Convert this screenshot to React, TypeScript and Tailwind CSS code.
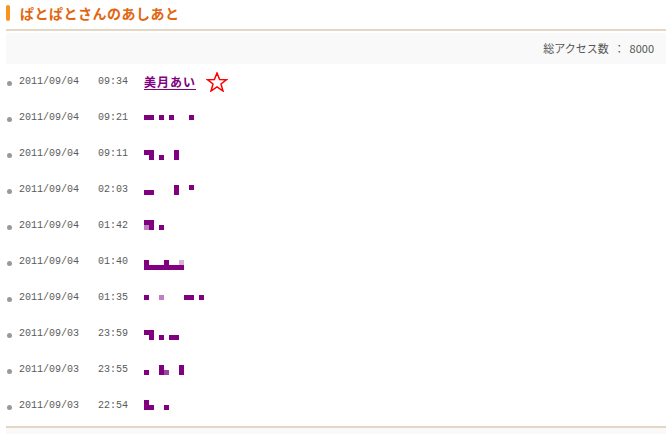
import React from "react";

type Cell = [number, number, number, number, string?];

type Visit = {
  date: string;
  time: string;
  cells: Cell[];
};

const D = "#800080";
const L = "#c080c0";
const LL = "#d8b0d8";
const M = "#a040a0";

const visits: Visit[] = [
  { date: "2011/09/04", time: "09:21", cells: [[0, 16, 10, 5], [15, 16, 5, 5], [25, 16, 5, 5], [45, 16, 5, 5]] },
  { date: "2011/09/04", time: "09:11", cells: [[0, 15, 10, 5], [5, 20, 5, 5], [15, 20, 5, 5], [30, 15, 5, 10]] },
  { date: "2011/09/04", time: "02:03", cells: [[30, 14, 5, 10], [45, 14, 5, 5], [0, 19, 10, 5]] },
  { date: "2011/09/04", time: "01:42", cells: [[0, 13, 10, 5], [0, 18, 5, 5, L], [5, 18, 5, 5], [15, 18, 5, 5]] },
  { date: "2011/09/04", time: "01:40", cells: [[0, 17, 5, 5], [20, 17, 5, 5], [35, 17, 5, 5, LL], [0, 22, 40, 5]] },
  { date: "2011/09/04", time: "01:35", cells: [[0, 16, 5, 5], [15, 16, 5, 5, L], [40, 16, 10, 5], [55, 16, 5, 5]] },
  { date: "2011/09/03", time: "23:59", cells: [[0, 15, 10, 5], [5, 20, 5, 5], [15, 20, 5, 5], [25, 20, 10, 5]] },
  { date: "2011/09/03", time: "23:55", cells: [[15, 14, 5, 5], [35, 14, 5, 5], [0, 19, 5, 5], [15, 19, 5, 5], [20, 19, 5, 5, M], [35, 19, 5, 5]] },
  { date: "2011/09/03", time: "22:54", cells: [[0, 13, 5, 5], [0, 18, 10, 5], [20, 18, 5, 5]] },
];

// mosaic blocks that hide the visitor's name
const Mosaic = ({ cells }: { cells: Cell[] }) => (
  <svg width="70" height="36" viewBox="0 1 70 36" shapeRendering="crispEdges">
    {cells.map(([x, y, w, h, c], i) => (
      <rect key={i} x={x} y={y} width={w} height={h} fill={c ?? D} />
    ))}
  </svg>
);

const Star = () => (
  <svg width="22" height="20" viewBox="0 0 22 20" className="ml-[10px]">
    <polygon
      points="11,1 13.6,7.6 20.6,7.7 15,12 17,19 11,14.8 5,19 7,12 1.4,7.7 8.4,7.6"
      fill="none"
      stroke="#ff0000"
      strokeWidth="1.5"
    />
  </svg>
);

const Row = ({ date, time, children }: { date: string; time: string; children: React.ReactNode }) => (
  <div className="flex items-center h-[36px]">
    <span className="ml-[1px] mt-[2px] w-[5px] h-[5px] rounded-full bg-[#999999]" />
    <span className="ml-[7px] text-[10px] leading-none text-[#5a5a5a] font-['Liberation_Mono',monospace]">{date}</span>
    <span className="ml-[19px] text-[10px] leading-none text-[#5a5a5a] font-['Liberation_Mono',monospace]">{time}</span>
    <div className="ml-[16px] flex items-center">{children}</div>
  </div>
);

export default function App() {
  return (
    <div className="w-[672px] h-[434px] bg-white overflow-hidden font-['Noto_Sans_CJK_JP',sans-serif]">
      <div className="ml-[6px] w-[660px]">
        <div className="h-[29px] flex items-center">
          <span className="w-[4px] h-[16px] rounded-full bg-[#f7941d] -mt-[3px]" />
          <h1 className="ml-[10px] -mt-[3px] text-[14px] leading-none font-bold text-[#e2660f] tracking-[0.5px]">
            ぱとぱとさんのあしあと
          </h1>
        </div>
        <div className="h-[2px] bg-[#e3d6c4]" />
        <div className="mt-[2px] h-[31px] bg-[#f9f9f9] flex items-center justify-end pr-[12px]">
          <span className="text-[11px] leading-none text-[#555555] whitespace-pre">総アクセス数  ：  8000</span>
        </div>

        <Row date="2011/09/04" time="09:34">
          <a
            href="#"
            className="text-[12px] leading-none font-bold text-[#800080] underline underline-offset-2 tracking-[1px]"
          >
            美月あい
          </a>
          <Star />
        </Row>
        {visits.map((v, i) => (
          <Row key={i} date={v.date} time={v.time}>
            <Mosaic cells={v.cells} />
          </Row>
        ))}

        <div className="mt-[2px] h-[2px] bg-[#e3d6c4]" />
        <div className="h-[10px] bg-[#f9f9f9]" />
      </div>
    </div>
  );
}
